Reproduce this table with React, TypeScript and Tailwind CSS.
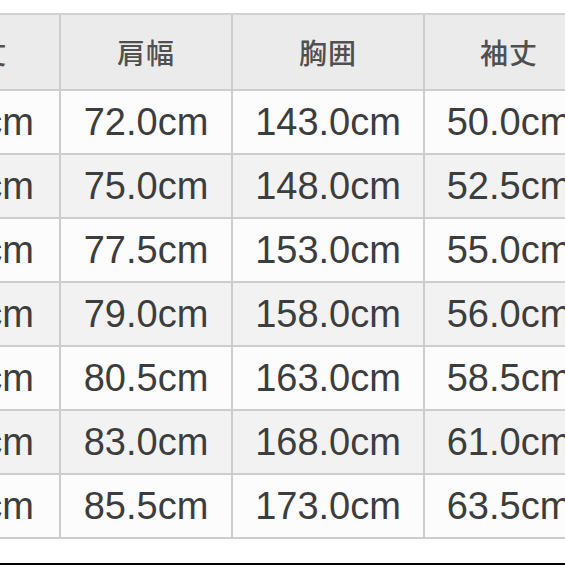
const headers = ['着丈', '肩幅', '胸囲', '袖丈']

const rows = [
  ['70.0cm', '72.0cm', '143.0cm', '50.0cm'],
  ['72.0cm', '75.0cm', '148.0cm', '52.5cm'],
  ['74.0cm', '77.5cm', '153.0cm', '55.0cm'],
  ['76.0cm', '79.0cm', '158.0cm', '56.0cm'],
  ['78.0cm', '80.5cm', '163.0cm', '58.5cm'],
  ['80.0cm', '83.0cm', '168.0cm', '61.0cm'],
  ['82.0cm', '85.5cm', '173.0cm', '63.5cm'],
]

const cell = 'flex items-center justify-center border-r-[2px] border-b-[2px] border-[#cdcdcd] whitespace-nowrap'

export default function App() {
  return (
    <div className="flex h-[565px] w-[565px] flex-col overflow-hidden bg-white">
      <div className="pt-[13px]">
        {/* size table, cropped on both sides */}
        <div className="ml-[-116px] grid w-[711px] grid-cols-[177px_172px_192px_170px] border-t-[2px] border-[#d2d2d2]">
          {headers.map((h, j) => (
            <div
              key={h}
              className={`${cell} h-[76px] bg-[#ebebeb] text-[28px] font-medium tracking-[1px] text-[#505050] [font-family:'Noto_Sans_CJK_JP',sans-serif] ${
                j === 0 ? 'pl-[14px]' : ''
              }`}
            >
              {h}
            </div>
          ))}
          {rows.map((r, i) =>
            r.map((v, j) => (
              <div
                key={`${i}-${j}`}
                className={`${cell} h-[64px] text-[38px] text-[#3d3d3d] [font-family:'Liberation_Sans',Arial,sans-serif] ${
                  i % 2 === 0 ? 'bg-[#fcfcfc]' : 'bg-[#f2f2f2]'
                }`}
              >
                {v}
              </div>
            )),
          )}
        </div>
      </div>
      <div className="flex-1" />
      <div className="h-[2px] bg-black" />
    </div>
  )
}
